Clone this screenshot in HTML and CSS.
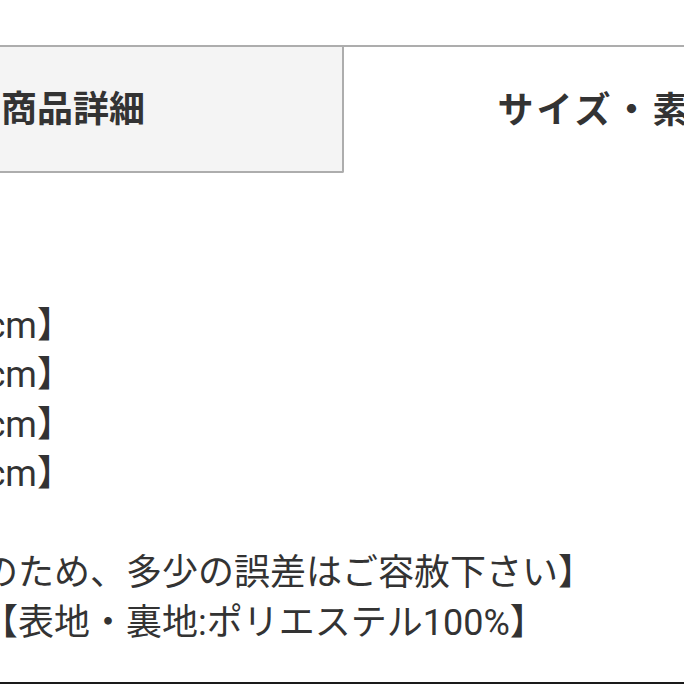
FILE: index.html
```html
<!DOCTYPE html>
<html lang="ja">
<head>
    <meta charset="UTF-8">
    <meta name="viewport" content="width=device-width, initial-scale=1.0">
    <title>商品詳細</title>
    <link rel="stylesheet" href="styles.css">
</head>
<body>
    <div class="page">
        <ul class="tabs">
            <li class="tab">商品詳細</li>
            <li class="tab active">サイズ・素材</li>
        </ul>

        <div class="detail">
            <p class="detail-text">
                【サイズ】<br>
                【着丈：約63cm】<br>
                【身幅：約50cm】<br>
                【肩幅：約42cm】<br>
                【袖丈：約60cm】<br>
                <br>
                【平置き採寸のため、多少の誤差はご容赦下さい】<br>
                素材（本体）【表地・裏地:ポリエステル100%】
            </p>
        </div>

        <div class="footer-line"></div>
    </div>
</body>
</html>
```

FILE: styles.css
```css
* {
    margin: 0;
    padding: 0;
    box-sizing: border-box;
}

html, body {
    width: 684px;
    height: 684px;
    overflow: hidden;
}

body {
    font-family: Roboto, 'Noto Sans CJK JP', sans-serif;
    background: #fff;
    color: #333;
    text-spacing-trim: space-all;
}

.page {
    padding-top: 45px;
}

.tabs {
    display: flex;
    list-style: none;
    margin-left: -196px;
    width: 1080px;
    border-top: 2px solid #adadad;
}

.tab {
    display: flex;
    align-items: center;
    justify-content: center;
    height: 126px;
    padding-bottom: 6px;
    font-size: 36px;
    font-weight: 700;
    color: #333;
    white-space: nowrap;
}

.tab:first-child {
    width: 540px;
    background: #f4f4f4;
    border-right: 2px solid #adadad;
    border-bottom: 2px solid #adadad;
    border-bottom-right-radius: 2px;
}

.tab.active {
    width: 540px;
    background: #fff;
    letter-spacing: 3px;
}

.detail {
    margin-left: -234px;
    padding: 79px 0 34px;
}

.detail-text {
    font-size: 36px;
    line-height: 49.5px;
    white-space: nowrap;
}

.footer-line {
    height: 2px;
    background: #1a1a1a;
}
```
